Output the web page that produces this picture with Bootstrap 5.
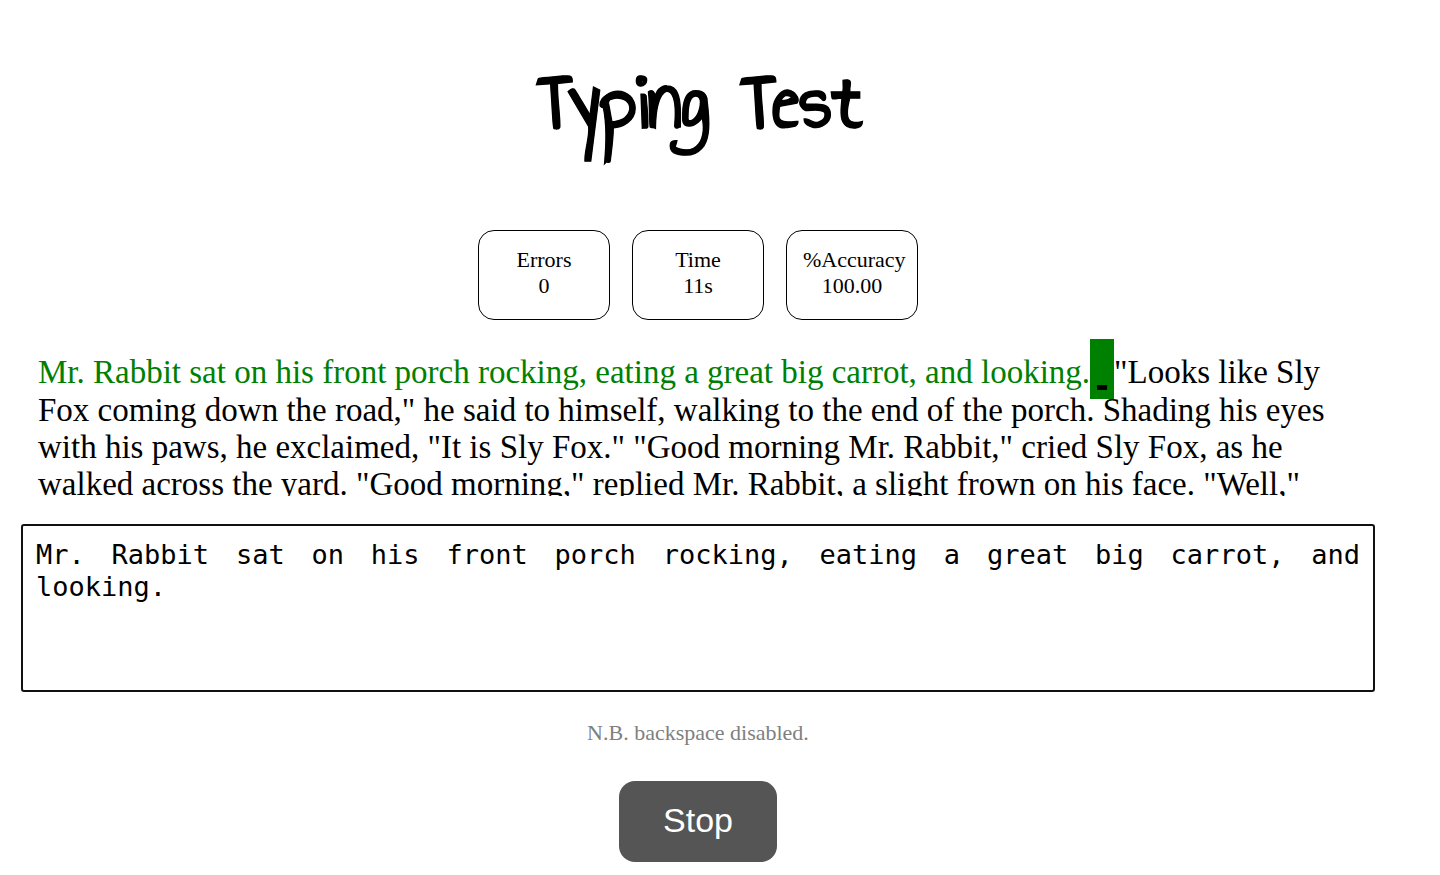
<!DOCTYPE html>
<html lang="en">
<head>
<meta charset="utf-8">
<meta name="viewport" content="width=device-width, initial-scale=1">
<title>Typing Test</title>
<link href="https://cdn.jsdelivr.net/npm/bootstrap@5.3.0/dist/css/bootstrap.min.css" rel="stylesheet">
<style>
body { font-family: "Liberation Serif", serif; color: #000; background: #fff; }
.page { padding: 54px 65px 13px 21px; }
.title { font: 700 83px/96px "Annie Use Your Telescope", "Comic Neue", "Liberation Sans", sans-serif; -webkit-text-stroke: 1px #000; margin-bottom: 80px; padding-left: 4px; }
.stats { gap: 22px; }
.stat { width: 132px; height: 90px; padding: 16px; border: 1px solid #000; border-radius: 16px; font-size: 22px; line-height: 26px; }
.passage { height: 157px; margin-top: 19px; padding: 15px 17px 0; overflow: hidden; font-size: 33px; line-height: 37px; }
.done { color: #008000; }
.cursor-mark { background: #008000; padding: 26px 7px 12px; font-size: 20px; line-height: 32px; text-decoration: underline; text-decoration-thickness: 4px; text-underline-offset: 3px; text-decoration-skip-ink: none; }
.entry { height: 168px; margin-top: 28px; padding: 13px; border: 2px solid #101010; border-radius: 3px; color: #000; font: 27px/32px "DejaVu Sans Mono", monospace; text-align: justify; resize: none; }
.note { margin: 28px 0 35px; font-size: 22px; line-height: 26px; color: #808080; }
.stop { width: 158px; height: 81px; padding: 0 0 4px; border: 0; border-radius: 16px; font: 34px/40px "Liberation Sans", sans-serif; }
.stop, .stop:hover { background: #555; color: #fff; }
</style>
</head>
<body>
<main class="page d-flex flex-column align-items-center">
<h1 class="title">Typing Test</h1>
<div class="stats d-flex text-center">
<div class="stat">Errors<br>0</div>
<div class="stat">Time<br>11s</div>
<div class="stat">%Accuracy<br>100.00</div>
</div>
<div class="passage w-100"><span class="done">Mr. Rabbit sat on his front porch rocking, eating a great big carrot, and looking.</span><span class="cursor-mark">_</span>"Looks like Sly Fox coming down the road," he said to himself, walking to the end of the porch. Shading his eyes with his paws, he exclaimed, "It is Sly Fox." "Good morning Mr. Rabbit," cried Sly Fox, as he walked across the yard. "Good morning," replied Mr. Rabbit, a slight frown on his face. "Well,"</div>
<textarea class="entry w-100" aria-label="Type the passage" spellcheck="false">Mr. Rabbit sat on his front porch rocking, eating a great big carrot, and looking.</textarea>
<p class="note">N.B. backspace disabled.</p>
<button type="button" class="stop btn">Stop</button>
</main>
<script src="https://cdn.jsdelivr.net/npm/bootstrap@5.3.0/dist/js/bootstrap.bundle.min.js"></script>
</body>
</html>
